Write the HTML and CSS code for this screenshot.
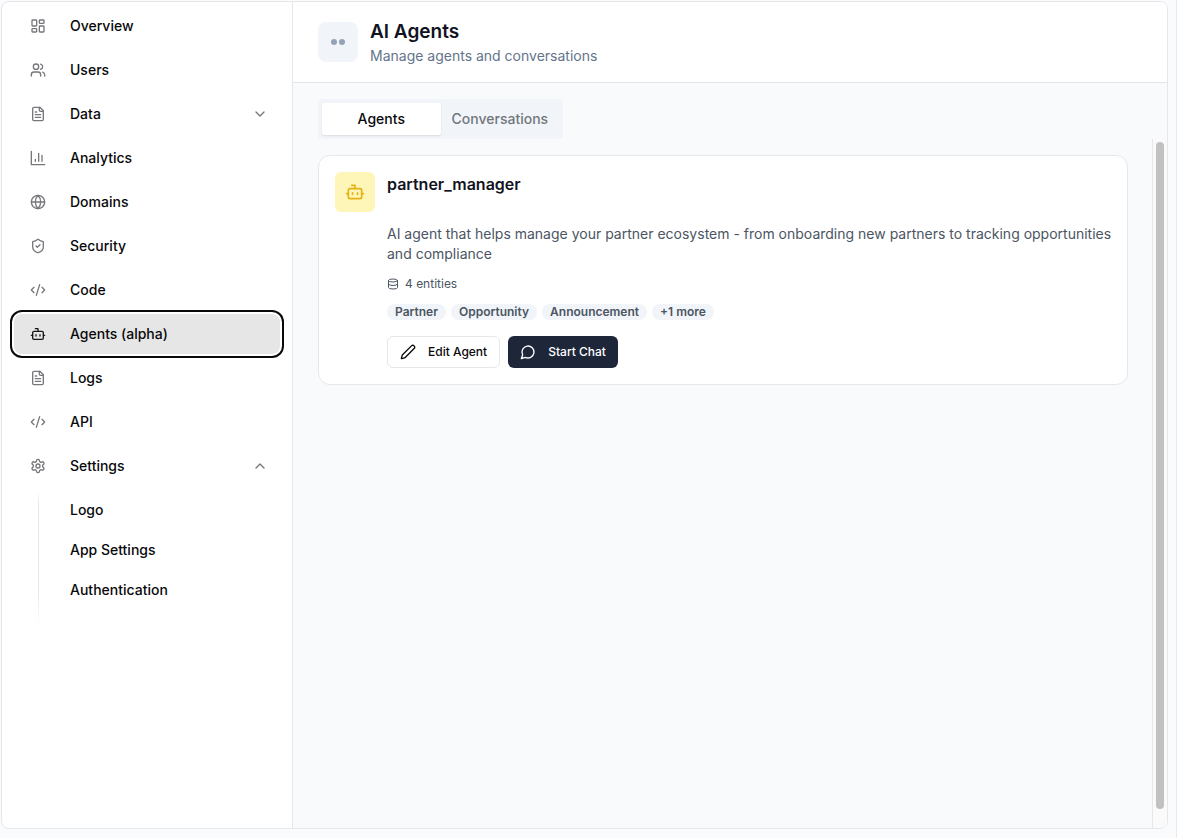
FILE: index.html
```html
<!DOCTYPE html>
<html lang="en">
<head>
    <meta charset="UTF-8">
    <meta name="viewport" content="width=device-width, initial-scale=1.0">
    <title>AI Agents</title>
    <link rel="stylesheet" href="styles.css">
</head>
<body>
    <!-- Icon sprite -->
    <svg class="sprite" xmlns="http://www.w3.org/2000/svg">
        <symbol id="i-dashboard" viewBox="0 0 24 24">
            <rect x="3" y="3" width="7" height="9" rx="1"/>
            <rect x="14" y="3" width="7" height="5" rx="1"/>
            <rect x="14" y="12" width="7" height="9" rx="1"/>
            <rect x="3" y="16" width="7" height="5" rx="1"/>
        </symbol>
        <symbol id="i-users" viewBox="0 0 24 24">
            <path d="M16 21v-2a4 4 0 0 0-4-4H6a4 4 0 0 0-4 4v2"/>
            <circle cx="9" cy="7" r="4"/>
            <path d="M22 21v-2a4 4 0 0 0-3-3.870M16 3.130a4 4 0 0 1 0 7.750"/>
        </symbol>
        <symbol id="i-file" viewBox="0 0 24 24">
            <path d="M15 2H6a2 2 0 0 0-2 2v16a2 2 0 0 0 2 2h12a2 2 0 0 0 2-2V7Z"/>
            <path d="M14 2v4a2 2 0 0 0 2 2h4M10 9H8M16 13H8M16 17H8"/>
        </symbol>
        <symbol id="i-chart" viewBox="0 0 24 24">
            <path d="M2 2v20h20M8 17v-3M13 17V5M18 17V8"/>
        </symbol>
        <symbol id="i-globe" viewBox="0 0 24 24">
            <circle cx="12" cy="12" r="10"/>
            <path d="M12 2a14.500 14.500 0 0 0 0 20 14.500 14.500 0 0 0 0-20M2 12h20"/>
        </symbol>
        <symbol id="i-shield" viewBox="0 0 24 24">
            <path d="M20 13c0 5-3.500 7.500-7.660 8.950a1 1 0 0 1-.67-.01C7.500 20.500 4 18 4 13V6a1 1 0 0 1 1-1c2 0 4.500-1.200 6.240-2.720a1.170 1.170 0 0 1 1.520 0C14.510 3.810 17 5 19 5a1 1 0 0 1 1 1z"/>
            <path d="m9 12 2 2 4-4"/>
        </symbol>
        <symbol id="i-code" viewBox="0 0 24 24">
            <path d="m18 16 4-4-4-4M6 8l-4 4 4 4M14.500 4l-5 16"/>
        </symbol>
        <symbol id="i-bot" viewBox="0 0 24 24">
            <path d="M12 8V4H8"/>
            <rect x="4" y="8" width="16" height="12" rx="2"/>
            <path d="M2 14h2M20 14h2M15 13v2M9 13v2"/>
        </symbol>
        <symbol id="i-gear" viewBox="0 0 24 24">
            <path d="M12.220 2h-.44a2 2 0 0 0-2 2v.18a2 2 0 0 1-1 1.730l-.43.25a2 2 0 0 1-2 0l-.15-.08a2 2 0 0 0-2.730.730l-.22.380a2 2 0 0 0 .730 2.730l.15.1a2 2 0 0 1 1 1.720v.510a2 2 0 0 1-1 1.740l-.15.090a2 2 0 0 0-.730 2.730l.220.380a2 2 0 0 0 2.730.730l.150-.080a2 2 0 0 1 2 0l.430.250a2 2 0 0 1 1 1.730V20a2 2 0 0 0 2 2h.440a2 2 0 0 0 2-2v-.180a2 2 0 0 1 1-1.730l.430-.250a2 2 0 0 1 2 0l.150.080a2 2 0 0 0 2.730-.730l.220-.390a2 2 0 0 0-.730-2.730l-.150-.080a2 2 0 0 1-1-1.740v-.500a2 2 0 0 1 1-1.740l.150-.090a2 2 0 0 0 .730-2.730l-.220-.380a2 2 0 0 0-2.730-.730l-.150.080a2 2 0 0 1-2 0l-.430-.250a2 2 0 0 1-1-1.730V4a2 2 0 0 0-2-2z"/>
            <circle cx="12" cy="12" r="3"/>
        </symbol>
        <symbol id="i-down" viewBox="0 0 24 24"><path d="m6 9 6 6 6-6"/></symbol>
        <symbol id="i-up" viewBox="0 0 24 24"><path d="m6 15 6-6 6 6"/></symbol>
        <symbol id="i-database" viewBox="0 0 24 24">
            <ellipse cx="12" cy="5" rx="9" ry="3"/>
            <path d="M3 5v14a9 3 0 0 0 18 0V5M3 12a9 3 0 0 0 18 0"/>
        </symbol>
        <symbol id="i-pencil" viewBox="0 0 24 24">
            <path d="M21.170 6.810a1 1 0 0 0-3.990-3.990L3.840 16.170a2 2 0 0 0-.5.830l-1.320 4.350a.5.5 0 0 0 .620.620l4.350-1.320a2 2 0 0 0 .830-.5z"/>
        </symbol>
        <symbol id="i-chat" viewBox="0 0 24 24">
            <path d="M7.900 20A9 9 0 1 0 4 16.100L2 22Z"/>
        </symbol>
    </svg>

    <div class="app">
        <nav class="sidebar">
            <a class="nav-item" href="#"><svg class="icon"><use href="#i-dashboard"/></svg>Overview</a>
            <a class="nav-item" href="#"><svg class="icon"><use href="#i-users"/></svg>Users</a>
            <button class="nav-item" aria-expanded="false"><svg class="icon"><use href="#i-file"/></svg>Data<svg class="icon chevron"><use href="#i-down"/></svg></button>
            <a class="nav-item" href="#"><svg class="icon"><use href="#i-chart"/></svg>Analytics</a>
            <a class="nav-item" href="#"><svg class="icon"><use href="#i-globe"/></svg>Domains</a>
            <a class="nav-item" href="#"><svg class="icon"><use href="#i-shield"/></svg>Security</a>
            <a class="nav-item" href="#"><svg class="icon"><use href="#i-code"/></svg>Code</a>
            <a class="nav-item active" href="#"><svg class="icon"><use href="#i-bot"/></svg>Agents (alpha)</a>
            <a class="nav-item" href="#"><svg class="icon"><use href="#i-file"/></svg>Logs</a>
            <a class="nav-item" href="#"><svg class="icon"><use href="#i-code"/></svg>API</a>
            <button class="nav-item" aria-expanded="true"><svg class="icon"><use href="#i-gear"/></svg>Settings<svg class="icon chevron"><use href="#i-up"/></svg></button>
            <div class="subnav">
                <a href="#">Logo</a>
                <a href="#">App Settings</a>
                <a href="#">Authentication</a>
            </div>
        </nav>

        <main class="main">
            <header class="page-header">
                <div class="page-logo"><span></span><span></span></div>
                <div>
                    <h1>AI Agents</h1>
                    <p>Manage agents and conversations</p>
                </div>
            </header>

            <div class="tab-row">
                <div class="tabs" role="tablist">
                    <button class="tab selected" role="tab" aria-selected="true">Agents</button>
                    <button class="tab" role="tab" aria-selected="false">Conversations</button>
                </div>
            </div>

            <div class="content">
                <div class="agent-list">
                    <article class="agent-card">
                        <div class="agent-head">
                            <div class="agent-icon"><svg class="icon"><use href="#i-bot"/></svg></div>
                            <h2>partner_manager</h2>
                        </div>
                        <div class="agent-body">
                            <p class="description">AI agent that helps manage your partner ecosystem - from onboarding new partners to tracking opportunities and compliance</p>
                            <div class="entities"><svg class="icon"><use href="#i-database"/></svg>4 entities</div>
                            <div class="badges">
                                <span class="badge">Partner</span>
                                <span class="badge">Opportunity</span>
                                <span class="badge">Announcement</span>
                                <span class="badge">+1 more</span>
                            </div>
                            <div class="actions">
                                <button class="btn btn-outline"><svg class="icon"><use href="#i-pencil"/></svg>Edit Agent</button>
                                <button class="btn btn-dark"><svg class="icon"><use href="#i-chat"/></svg>Start Chat</button>
                            </div>
                        </div>
                    </article>
                </div>
                <div class="scrollbar"><div class="thumb"></div></div>
            </div>
        </main>
    </div>
</body>
</html>
```
FILE: styles.css
```css
* {
    box-sizing: border-box;
}

body {
    margin: 0;
    height: 100vh;
    padding: 1px 8px 9px 1px;
    border-right: 1px solid #e8eaec;
    background: #fafbfc;
    color: #09090b;
    font-family: Inter, 'Liberation Sans', sans-serif;
    font-size: 14px;
    line-height: 20px;
}

h1, h2, p {
    margin: 0;
}

a {
    color: inherit;
    text-decoration: none;
}

button {
    font: inherit;
    color: inherit;
    border: none;
    background: none;
    cursor: pointer;
}

.sprite {
    display: none;
}

.icon {
    flex: none;
    width: 16px;
    height: 16px;
    fill: none;
    stroke: currentColor;
    stroke-width: 2;
    stroke-linecap: round;
    stroke-linejoin: round;
}

.app {
    display: flex;
    height: 100%;
    border: 1px solid #e5e7eb;
    border-radius: 8px;
    overflow: hidden;
    background: #fff;
}

/* Sidebar */
.sidebar {
    flex: none;
    display: flex;
    flex-direction: column;
    gap: 4px;
    width: 291px;
    padding: 4px 12px;
    border-right: 1px solid #e5e7eb;
}

.nav-item {
    display: flex;
    align-items: center;
    gap: 24px;
    height: 40px;
    padding: 0 12px 0 16px;
    border-radius: 8px;
    font-weight: 500;
    text-align: left;
}

.nav-item .icon {
    color: #77777c;
}

.nav-item .chevron {
    margin-left: auto;
}

.nav-item.active {
    background: #e6e6e6;
    box-shadow: 0 0 0 2px #fff, 0 0 0 4px #09090b;
}

.nav-item.active .icon {
    color: #18181b;
}

.subnav {
    display: flex;
    flex-direction: column;
    margin-left: 24px;
    padding: 0 0 16px 32px;
    background: linear-gradient(transparent, #e5e7eb 10%, #e5e7eb 75%, transparent) left / 1px 100% no-repeat;
    font-weight: 500;
}

.subnav a {
    padding: 10px 0;
}

/* Main column */
.main {
    flex: 1;
    min-width: 0;
    display: flex;
    flex-direction: column;
    background: #f8fafc;
}

.page-header {
    display: flex;
    align-items: center;
    gap: 12px;
    padding: 16px 25px;
    border-bottom: 1px solid #e2e5e9;
    background: #fff;
}

.page-logo {
    display: flex;
    align-items: center;
    justify-content: center;
    gap: 2px;
    width: 40px;
    height: 40px;
    border-radius: 8px;
    background: #f1f5f9;
}

.page-logo span {
    width: 6px;
    height: 6px;
    border-radius: 50%;
    background: #94a3b8;
}

h1 {
    font-size: 19px;
    line-height: 28px;
    font-weight: 600;
    color: #111322;
}

.page-header p {
    color: #64748b;
}

.tab-row {
    padding: 16px 25px 0;
}

.tabs {
    display: inline-grid;
    grid-template-columns: 1fr 1fr;
    padding: 4px;
    border-radius: 4px;
    background: #f1f5f9;
    vertical-align: top;
}

.tab {
    height: 32px;
    padding: 0 11px;
    border-radius: 2px;
    font-weight: 500;
    color: #71757c;
}

.tab.selected {
    background: #fff;
    color: #09090b;
    box-shadow: 0 1px 2px rgba(0, 0, 0, 0.1);
}

.content {
    flex: 1;
    display: flex;
    min-height: 0;
}

.agent-list {
    flex: 1;
    padding: 16px 24px 16px 25px;
}

.scrollbar {
    flex: none;
    width: 15px;
    padding: 3px 3px 19px;
    border-left: 1px solid #e8e8e8;
    background: #fafafa;
}

.thumb {
    width: 8px;
    height: 100%;
    border-radius: 4px;
    background: #c1c1c1;
}

/* Agent card */
.agent-card {
    padding: 16px 8px 16px 16px;
    border: 1px solid #e5e7eb;
    border-radius: 12px;
    background: #fff;
}

.agent-head {
    display: flex;
    gap: 12px;
}

.agent-icon {
    display: flex;
    align-items: center;
    justify-content: center;
    width: 40px;
    height: 40px;
    border-radius: 6px;
    background: #fef6b8;
    color: #e5b216;
}

.agent-icon .icon {
    width: 20px;
    height: 20px;
}

h2 {
    font-size: 16px;
    line-height: 24px;
    font-weight: 600;
    color: #111322;
}

.agent-body {
    display: flex;
    flex-direction: column;
    gap: 12px;
    margin: 12px 0 0 52px;
    font-size: 12px;
    line-height: 16px;
    color: #4b5563;
}

.description {
    font-size: 14px;
    line-height: 20px;
}

.entities {
    display: flex;
    align-items: center;
    gap: 6px;
}

.entities .icon {
    width: 12px;
    height: 12px;
}

.badges {
    display: flex;
    gap: 5px;
}

.badge {
    padding: 0 8px;
    border-radius: 8px;
    background: #f1f5f9;
    font-weight: 600;
}

.actions {
    display: flex;
    gap: 8px;
    margin-top: 4px;
}

.btn {
    display: flex;
    align-items: center;
    gap: 12px;
    height: 32px;
    padding: 0 12px;
    border-radius: 6px;
    font-weight: 500;
}

.btn-outline {
    border: 1px solid #e5e7eb;
    background: #fff;
    color: #09090b;
}

.btn-dark {
    background: #1e263a;
    color: #fff;
}
```
